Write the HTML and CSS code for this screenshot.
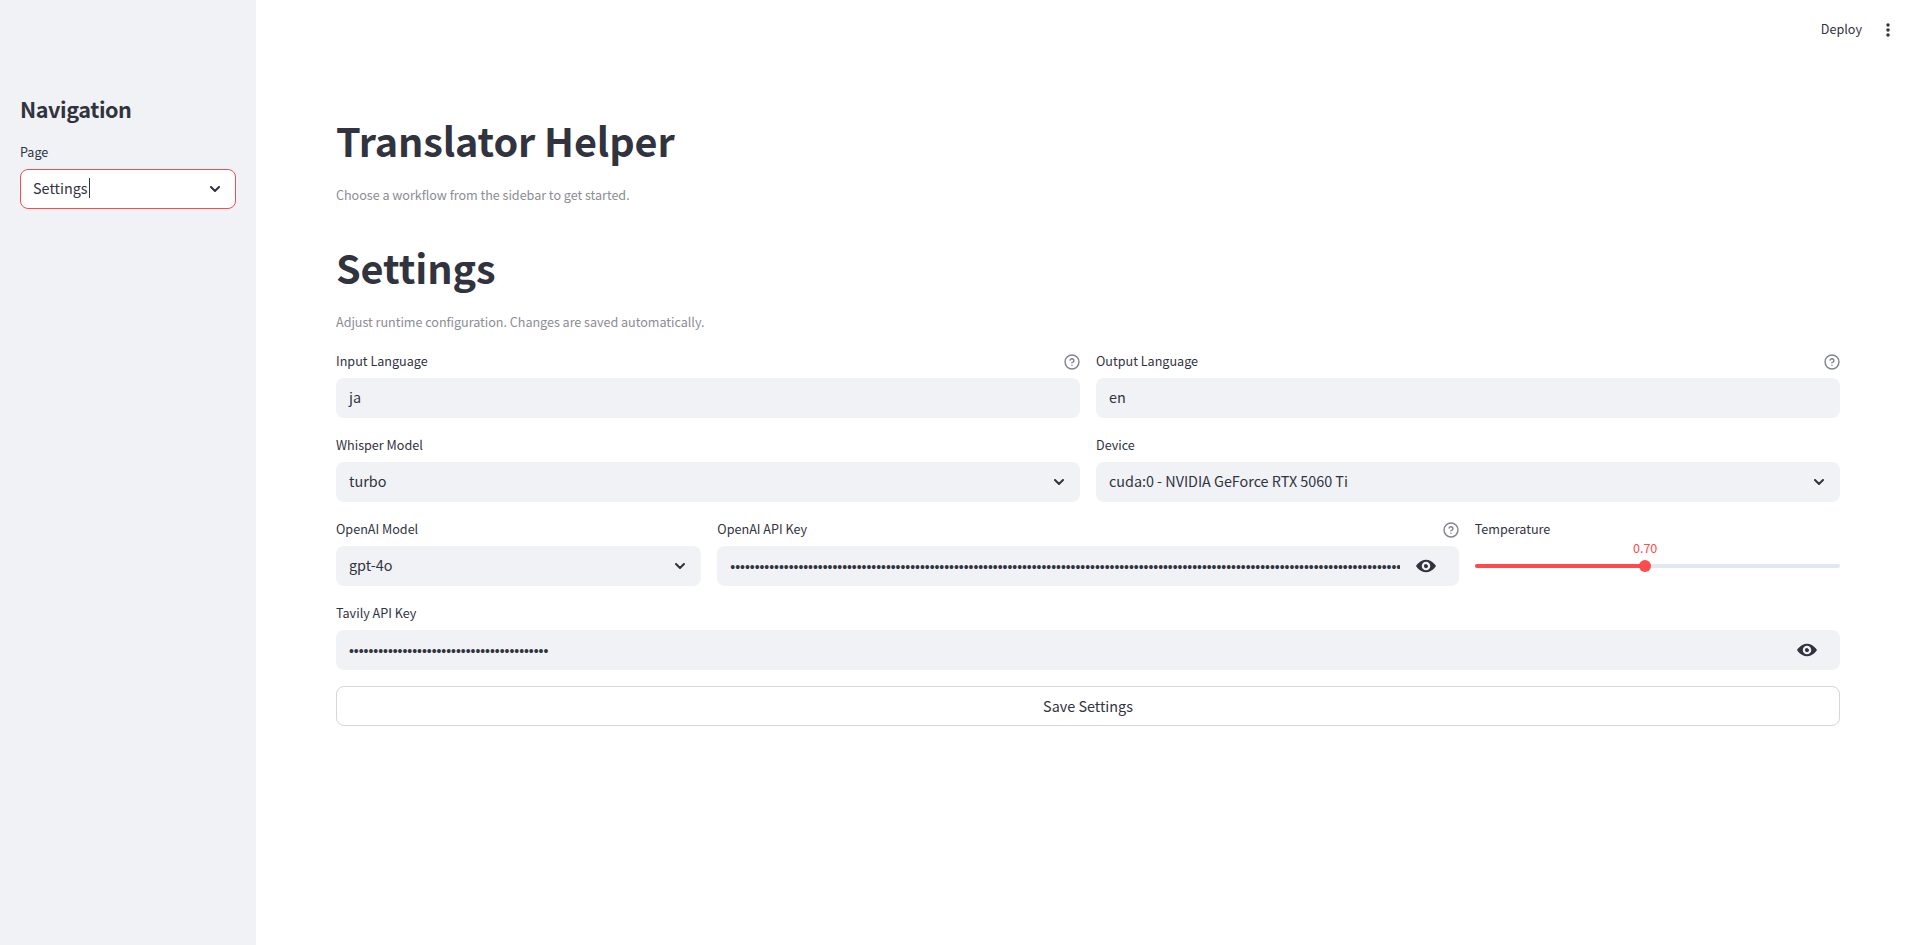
FILE: index.html
```html
<!DOCTYPE html>
<html lang="en">
<head>
<meta charset="utf-8">
<title>Translator Helper</title>
<link rel="stylesheet" href="styles.css">
</head>
<body>
<svg class="defs" width="0" height="0" aria-hidden="true">
  <symbol id="chevron" viewBox="0 0 10 6"><path d="M1 1l4 4 4-4" fill="none" stroke="currentColor" stroke-width="2" stroke-linecap="round" stroke-linejoin="miter"/></symbol>
  <symbol id="help" viewBox="0 0 24 24"><g fill="none" stroke="currentColor" stroke-width="2.2" stroke-linecap="round" stroke-linejoin="round"><circle cx="12" cy="12" r="10.4"/><path d="M9.09 9a3 3 0 0 1 5.83 1c0 2-3 3-3 3M12 17h.01"/></g></symbol>
  <symbol id="eye" viewBox="0 0 8 8"><path d="M4.03 1.5c-2.53 0-4.03 2.5-4.03 2.5s1.5 2.5 4.03 2.5c2.47 0 3.97-2.5 3.97-2.5s-1.5-2.5-3.97-2.5zM4 2.3a1.7 1.7 0 1 1 0 3.4 1.7 1.7 0 0 1 0-3.4zM4 3.15a.85.85 0 1 0 .85.85c0-.12-.03-.2-.06-.3a.42.42 0 0 1-.5-.5c-.1-.03-.18-.05-.29-.05z" fill="currentColor" fill-rule="evenodd"/></symbol>
</svg>
<div class="app">
  <aside class="sidebar">
    <h2 class="nav-title">Navigation</h2>
    <div class="field">
      <div class="label nav-label"><span>Page</span></div>
      <div class="control focused"><span class="value typing">Settings</span><svg class="chevron"><use href="#chevron"/></svg></div>
    </div>
  </aside>
  <div class="page">
    <header class="toolbar">
      <span class="deploy">Deploy</span>
      <svg class="menu" viewBox="0 0 4 14"><g fill="currentColor"><circle cx="2" cy="2" r="1.75"/><circle cx="2" cy="7" r="1.75"/><circle cx="2" cy="12" r="1.75"/></g></svg>
    </header>
    <main class="content">
      <section class="intro">
        <h1 class="title">Translator Helper</h1>
        <p class="caption">Choose a workflow from the sidebar to get started.</p>
      </section>
      <section class="intro settings-intro">
        <h1 class="title settings-title">Settings</h1>
        <p class="caption">Adjust runtime configuration. Changes are saved automatically.</p>
      </section>
      <div class="row">
        <div class="field half">
          <div class="label"><span>Input Language</span><svg class="help"><use href="#help"/></svg></div>
          <div class="control"><span class="value">ja</span></div>
        </div>
        <div class="field half">
          <div class="label"><span>Output Language</span><svg class="help"><use href="#help"/></svg></div>
          <div class="control"><span class="value">en</span></div>
        </div>
      </div>
      <div class="row">
        <div class="field half">
          <div class="label"><span>Whisper Model</span></div>
          <div class="control"><span class="value">turbo</span><svg class="chevron"><use href="#chevron"/></svg></div>
        </div>
        <div class="field half">
          <div class="label"><span>Device</span></div>
          <div class="control"><span class="value device">cuda:0 - NVIDIA GeForce RTX 5060 Ti</span><svg class="chevron"><use href="#chevron"/></svg></div>
        </div>
      </div>
      <div class="row">
        <div class="field quarter">
          <div class="label"><span>OpenAI Model</span></div>
          <div class="control"><span class="value">gpt-4o</span><svg class="chevron"><use href="#chevron"/></svg></div>
        </div>
        <div class="field half">
          <div class="label"><span>OpenAI API Key</span><svg class="help"><use href="#help"/></svg></div>
          <div class="control secret"><span class="dots">••••••••••••••••••••••••••••••••••••••••••••••••••••••••••••••••••••••••••••••••••••••••••••••••••••••••••••••••••••••••••••••••••••••••••••••••••••••••••••••••••••</span><svg class="eye"><use href="#eye"/></svg></div>
        </div>
        <div class="field quarter">
          <div class="label"><span>Temperature</span></div>
          <div class="slider">
            <div class="track"><div class="fill" style="width:46.67%"><div class="thumb"><span class="amount">0.70</span></div></div></div>
          </div>
        </div>
      </div>
      <div class="field">
        <div class="label"><span>Tavily API Key</span></div>
        <div class="control secret"><span class="dots">•••••••••••••••••••••••••••••••••••••••••</span><svg class="eye"><use href="#eye"/></svg></div>
      </div>
      <button class="save"><span>Save Settings</span></button>
    </main>
  </div>
</div>
</body>
</html>
```
FILE: styles.css
```css
* { box-sizing: border-box; }
body {
  margin: 0;
  background: #fff;
  color: #31333f;
  font: 14.4px/24px "Noto Sans CJK JP", "Noto Sans", sans-serif;
}
.defs { display: none; }
.app { display: flex; height: 945px; overflow: hidden; }
.sidebar { width: 256px; flex: none; background: #f0f2f6; padding: 94px 20px 0; }
.nav-title { margin: 0; font-size: 21.6px; line-height: 29px; font-weight: 600; height: 47px; letter-spacing: -0.42px; }
.page { flex: 1; min-width: 0; }
.toolbar { height: 60px; display: flex; align-items: center; justify-content: flex-end; padding-right: 30px; gap: 24px; font-size: 12.6px; }
.deploy { margin-bottom: 2px; }
.menu { width: 4px; height: 14px; display: block; }
.content { padding: 36px 80px 0; display: flex; flex-direction: column; gap: 16px; }
.intro { height: 111.2px; }
.settings-intro { height: 110.8px; }
.title { margin: 0; padding: 18.4px 0 16.6px; font-size: 39.6px; line-height: 52.8px; font-weight: 700; letter-spacing: -0.1px; }
.settings-title { padding: 17.4px 0 17.6px; }
.caption { margin: 0; font-size: 12.6px; line-height: 22.4px; color: #8b8c94; letter-spacing: -0.03px; }
.row { display: flex; gap: 16px; }
.field { min-width: 0; }
.half { flex: 1 1 calc(50% - 16px); }
.quarter { flex: 1 1 calc(25% - 16px); }
.label { display: flex; align-items: center; justify-content: space-between; height: 24px; margin-bottom: 4px; font-size: 12.6px; line-height: 22px; }
.label span { margin-bottom: 2px; }
.help { width: 16px; height: 16px; color: #83858c; }
.control { height: 40px; border-radius: 8px; background: #f0f2f6; display: flex; align-items: center; justify-content: space-between; padding: 0 16px 0 13px; }
.focused { background: #fff; border: 1px solid #ff4b4b; padding: 0 15px 0 12px; }
.value { white-space: nowrap; margin-bottom: 2px; }
.device { letter-spacing: -0.03px; }
.typing { border-right: 1px solid #31333f; line-height: 20px; padding-right: 1px; }
.chevron { width: 10px; height: 6px; flex: none; }
.secret { padding-right: 23px; }
.dots { flex: 1; min-width: 0; overflow: hidden; white-space: nowrap; font-family: "Liberation Sans", sans-serif; font-size: 14px; letter-spacing: -0.04px; margin: 2px 16px 0 0; }
.eye { width: 20px; height: 20px; flex: none; }
.slider { height: 40px; padding-top: 18px; }
.track { height: 4px; border-radius: 4px; background: #e3e7ef; }
.fill { height: 4px; border-radius: 4px; background: #ff4b4b; display: flex; justify-content: flex-end; align-items: center; }
.thumb { width: 12px; height: 12px; flex: none; margin-right: -6px; border-radius: 50%; background: #ff4b4b; position: relative; }
.amount { position: absolute; left: -14px; width: 40px; text-align: center; bottom: 13px; font-size: 12.6px; line-height: 22px; color: #ff4b4b; }
.save { height: 40px; border: 1px solid #d5d6d8; border-radius: 8px; background: #fff; color: inherit; font: inherit; padding: 0; }
```
